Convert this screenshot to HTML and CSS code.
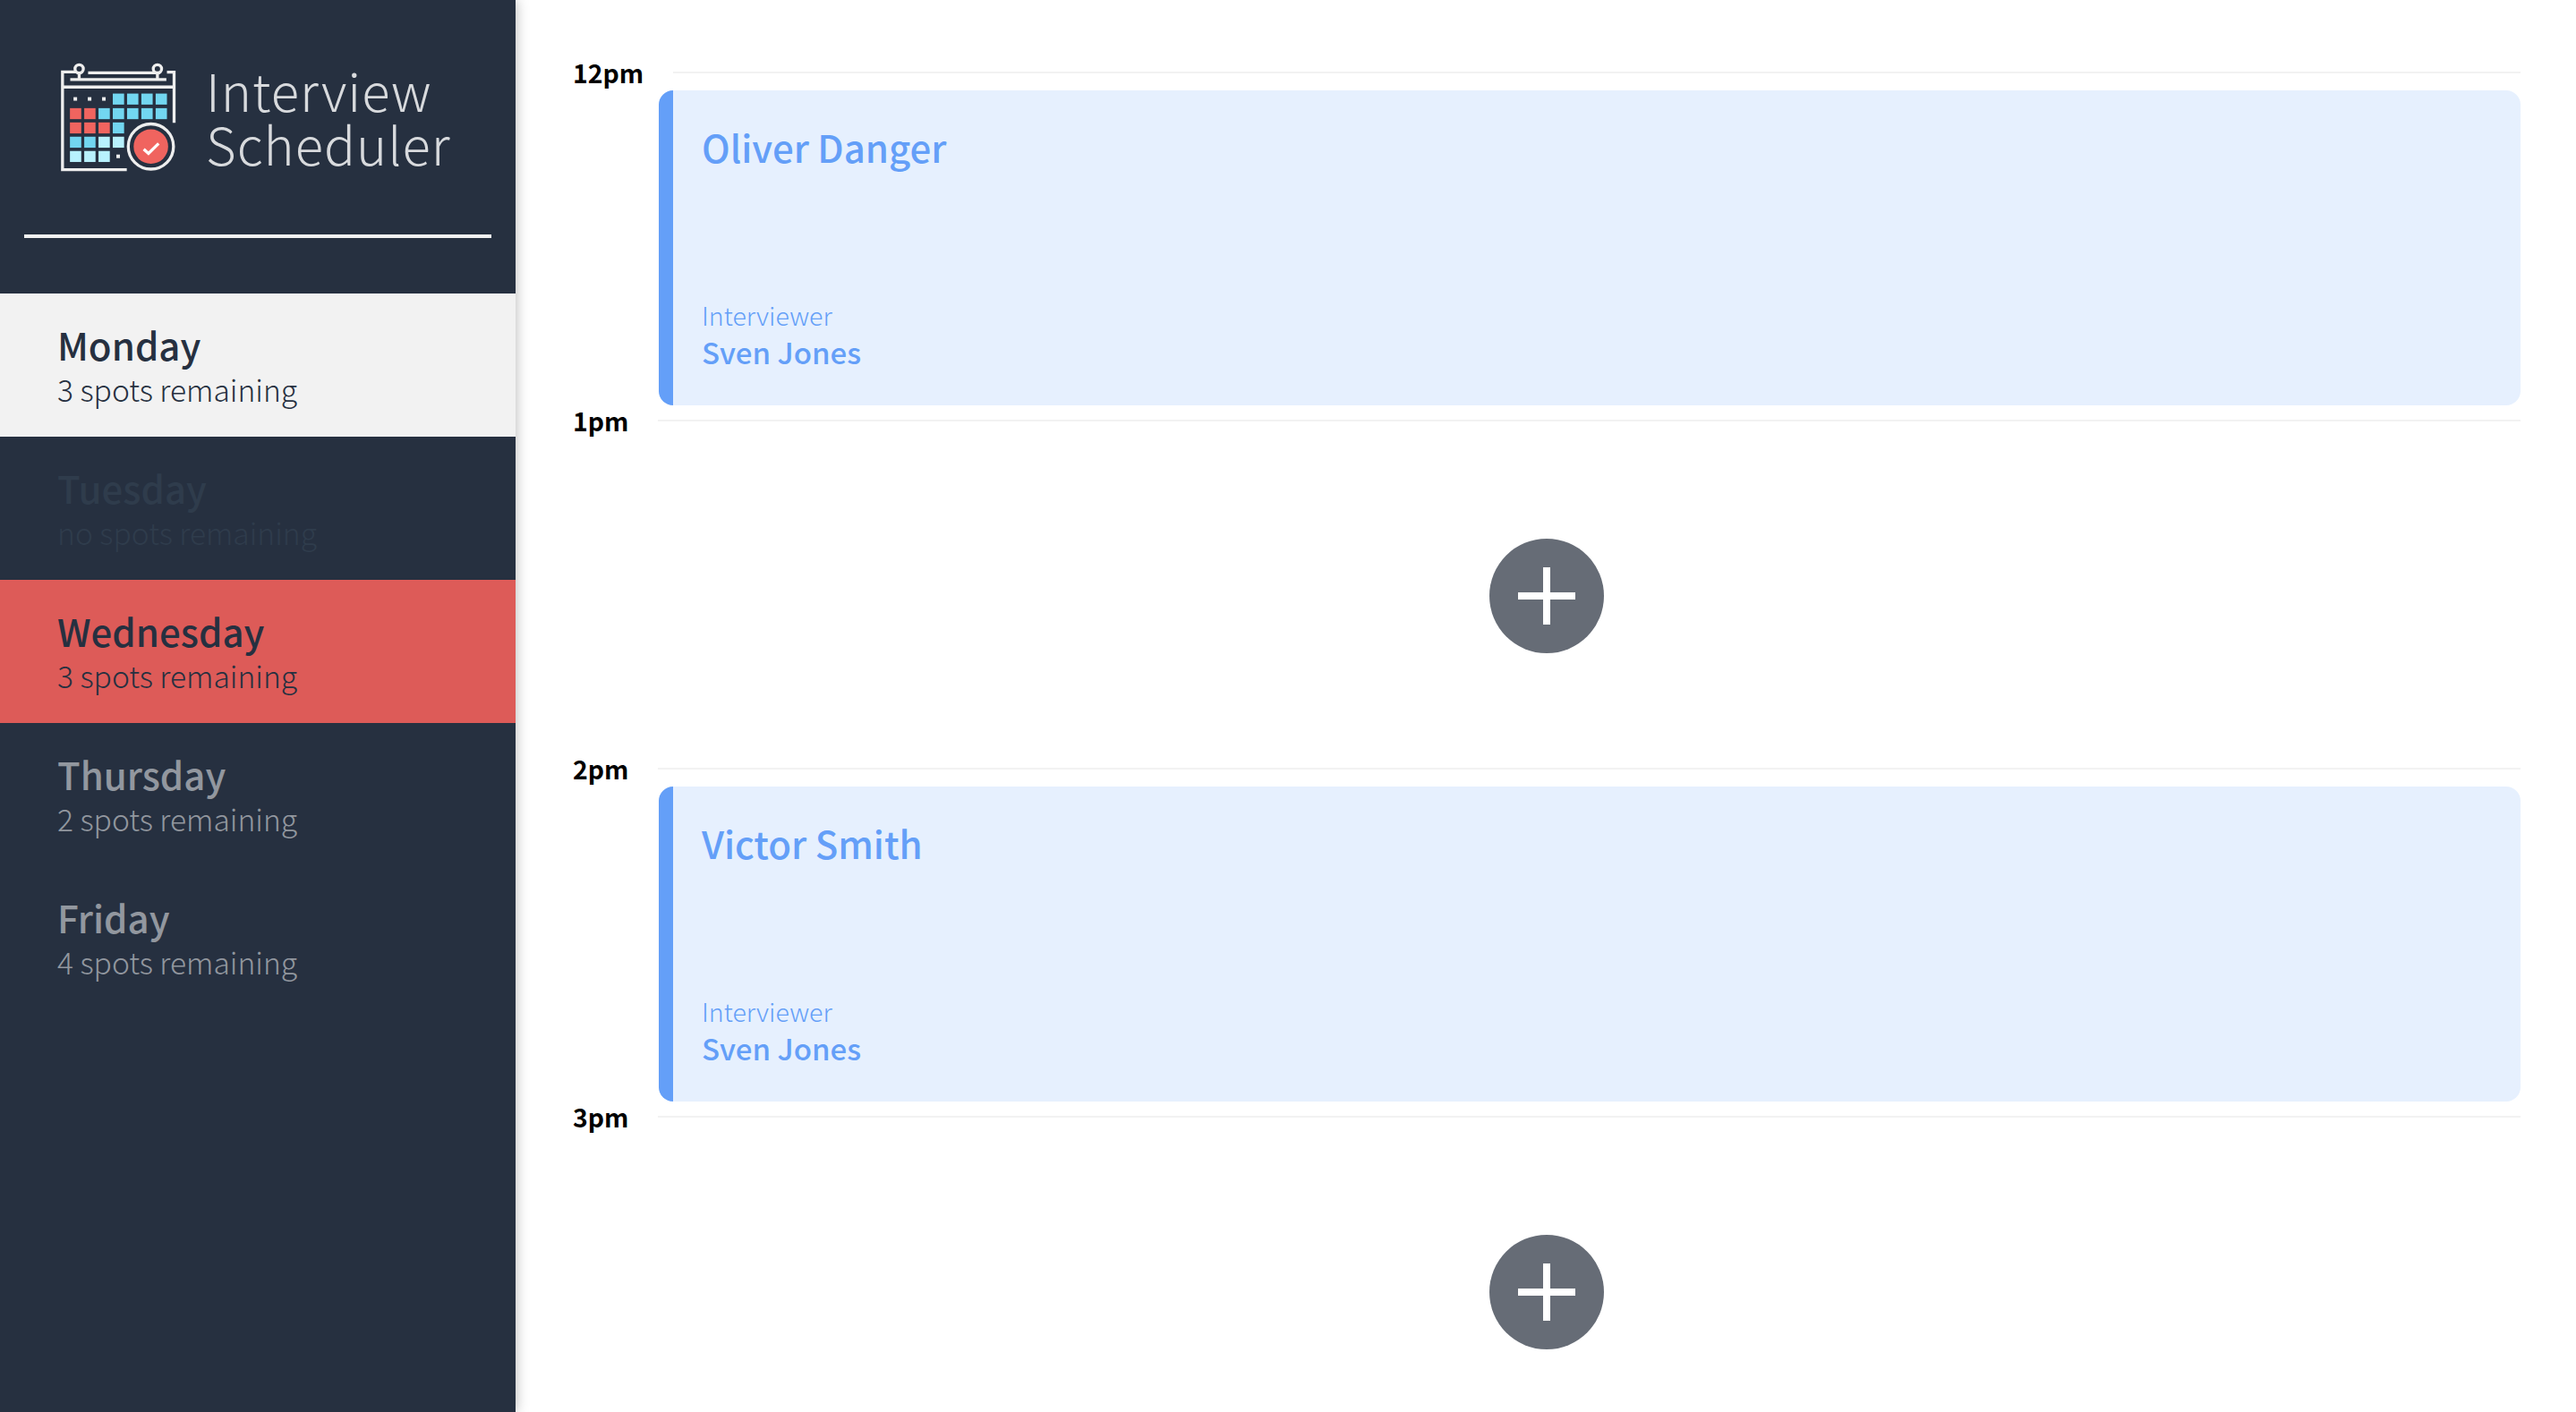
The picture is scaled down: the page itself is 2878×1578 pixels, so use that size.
FILE: index.html
```html
<!DOCTYPE html>
<html lang="en">
<head>
  <meta charset="UTF-8" />
  <meta name="viewport" content="width=device-width, initial-scale=1.0" />
  <title>Interview Scheduler</title>
  <link rel="stylesheet" href="styles.css">
</head>
<body>
  <div class="layout">
    <aside class="sidebar">
      <div class="brand">
        <svg class="brand-icon" viewBox="84 60 390 370" aria-hidden="true">
          <g fill="none" stroke="#eeeeee" stroke-width="10">
            <path d="M135 94H89V423H305" />
            <path d="M440 95H464V265" />
            <path d="M89 145H464" />
            <path d="M115 120H438" />
            <path d="M175 97H415" />
            <circle cx="145" cy="84" r="14" />
            <circle cx="408" cy="84" r="14" />
            <path d="M145 98V120M408 98V120" />
            <circle cx="386" cy="345" r="76" />
          </g>
          <g fill="#eeeeee">
            <rect x="126" y="179" width="12" height="12" />
            <rect x="174" y="179" width="12" height="12" />
            <rect x="222" y="179" width="12" height="12" />
            <rect x="270" y="372" width="12" height="12" />
          </g>
          <g fill="#72d6f0">
            <rect x="258" y="167" width="38" height="37" />
            <rect x="306" y="167" width="38" height="37" />
            <rect x="354" y="167" width="38" height="37" />
            <rect x="402" y="167" width="38" height="37" />
            <rect x="210" y="216" width="38" height="37" />
            <rect x="258" y="216" width="38" height="37" />
            <rect x="306" y="216" width="38" height="37" />
            <rect x="354" y="216" width="38" height="37" />
            <rect x="402" y="216" width="38" height="37" />
            <rect x="258" y="264" width="38" height="37" />
            <rect x="114" y="312" width="38" height="37" />
            <rect x="162" y="312" width="38" height="37" />
          </g>
          <g fill="#f0645f">
            <rect x="114" y="216" width="38" height="37" />
            <rect x="162" y="216" width="38" height="37" />
            <rect x="114" y="264" width="38" height="37" />
            <rect x="162" y="264" width="38" height="37" />
            <rect x="210" y="264" width="38" height="37" />
            <circle cx="386" cy="345" r="58" />
          </g>
          <g fill="#b8f1fd">
            <rect x="210" y="312" width="38" height="37" />
            <rect x="258" y="312" width="38" height="37" />
            <rect x="114" y="360" width="38" height="37" />
            <rect x="162" y="360" width="38" height="37" />
            <rect x="210" y="360" width="38" height="37" />
          </g>
          <path d="M362 354L378 368L412 335" fill="none" stroke="#ffffff" stroke-width="10" />
        </svg>
        <div class="brand-name">Interview<br />Scheduler</div>
      </div>
      <hr class="sidebar-rule" />
      <ul class="day-list">
        <li class="day day-selected">
          <h2 class="day-name">Monday</h2>
          <p class="day-spots">3 spots remaining</p>
        </li>
        <li class="day day-full">
          <h2 class="day-name">Tuesday</h2>
          <p class="day-spots">no spots remaining</p>
        </li>
        <li class="day day-hover">
          <h2 class="day-name">Wednesday</h2>
          <p class="day-spots">3 spots remaining</p>
        </li>
        <li class="day">
          <h2 class="day-name">Thursday</h2>
          <p class="day-spots">2 spots remaining</p>
        </li>
        <li class="day">
          <h2 class="day-name">Friday</h2>
          <p class="day-spots">4 spots remaining</p>
        </li>
      </ul>
    </aside>

    <main class="schedule">
      <article class="slot">
        <header class="slot-time"><h4>12pm</h4><hr /></header>
        <div class="appointment">
          <h2 class="student">Oliver Danger</h2>
          <div>
            <h4 class="interviewer-label">Interviewer</h4>
            <h3 class="interviewer-name">Sven Jones</h3>
          </div>
        </div>
      </article>
      <article class="slot">
        <header class="slot-time"><h4>1pm</h4><hr /></header>
        <div class="empty-slot">
          <button class="add-btn" aria-label="Add"></button>
        </div>
      </article>
      <article class="slot">
        <header class="slot-time"><h4>2pm</h4><hr /></header>
        <div class="appointment">
          <h2 class="student">Victor Smith</h2>
          <div>
            <h4 class="interviewer-label">Interviewer</h4>
            <h3 class="interviewer-name">Sven Jones</h3>
          </div>
        </div>
      </article>
      <article class="slot">
        <header class="slot-time"><h4>3pm</h4><hr /></header>
        <div class="empty-slot">
          <button class="add-btn" aria-label="Add"></button>
        </div>
      </article>
    </main>
  </div>
</body>
</html>
```

FILE: styles.css
```css
* {
  box-sizing: border-box;
}
html, body {
  height: 100%;
  margin: 0;
  overflow: hidden;
}
body {
  font-family: "Noto Sans CJK JP", "Noto Sans", sans-serif;
  background: #fff;
  color: #263040;
}
h2, h3, h4, p, ul {
  margin: 0;
  padding: 0;
}
.layout {
  display: flex;
  height: 100%;
}

/* sidebar */
.sidebar {
  flex: 0 0 576px;
  background: #263040;
  box-shadow: 0 0 14px rgba(0,0,0,0.3);
  position: relative;
  z-index: 1;
}
.brand {
  display: flex;
  align-items: center;
  gap: 32px;
  height: 262px;
  padding: 0 0 2px 68px;
}
.brand-icon {
  width: 130px;
  height: 123px;
  flex: none;
}
.brand-name {
  font-size: 58px;
  font-weight: 300;
  line-height: 60px;
  letter-spacing: 1px;
  color: #d8dadd;
}
.sidebar-rule {
  height: 4px;
  margin: 0 27px 62px;
  border: 0;
  background: #f2f2f2;
}
.day-list {
  list-style: none;
}
.day {
  height: 160px;
  padding: 30px 64px 0;
  color: rgba(255,255,255,0.5);
}
.day-name {
  font-size: 42px;
  font-weight: 500;
  line-height: 54px;
}
.day-spots {
  font-size: 33.6px;
  font-weight: 300;
  line-height: 46px;
}
.day-selected {
  background: #f2f2f2;
  color: #263040;
}
.day-hover {
  background: #dd5b58;
  color: #263040;
}
.day-full {
  color: #2f3c4c;
}

/* schedule */
.schedule {
  flex: 1;
  padding: 61px 62px 0 64px;
}
.slot {
  height: 389px;
}
.slot-time {
  display: flex;
  align-items: center;
  height: 40px;
}
.slot-time h4 {
  font-size: 28.4px;
  font-weight: 700;
  line-height: 40px;
  color: #000;
}
.slot-time hr {
  flex: 1;
  height: 2px;
  margin: 0 0 0 33px;
  border: 0;
  background: #f2f2f2;
}
.appointment {
  display: flex;
  flex-direction: column;
  justify-content: space-between;
  height: 352px;
  margin-left: 96px;
  padding: 33px 32px 39px;
  background: #e6f0fe;
  border-left: 16px solid #649ff8;
  border-radius: 16px;
  color: #649ff8;
}
.student {
  font-size: 42px;
  font-weight: 500;
  line-height: 60px;
}
.interviewer-label {
  font-size: 28.6px;
  font-weight: 300;
  line-height: 40px;
}
.interviewer-name {
  font-size: 33px;
  font-weight: 500;
  line-height: 42px;
}
.empty-slot {
  display: flex;
  align-items: center;
  justify-content: center;
  height: 352px;
}
.add-btn {
  position: relative;
  width: 128px;
  height: 128px;
  padding: 0;
  border: 0;
  border-radius: 50%;
  background: #666c76;
}
.add-btn::before,
.add-btn::after {
  content: "";
  position: absolute;
  left: 32px;
  top: 60px;
  width: 64px;
  height: 8px;
  background: #fff;
}
.add-btn::after {
  transform: rotate(90deg);
}
```
